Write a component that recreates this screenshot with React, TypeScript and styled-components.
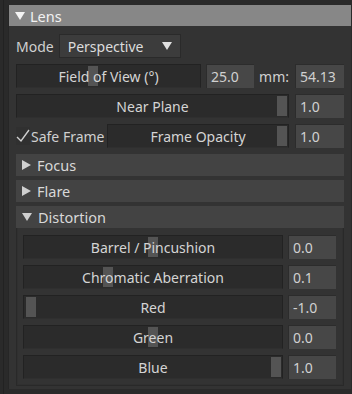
import styled, { createGlobalStyle } from "styled-components";

const GlobalStyle = createGlobalStyle`
  html, body {
    margin: 0;
    padding: 0;
    background: #2a2a2a;
  }
  * {
    box-sizing: border-box;
  }
`;

const Frame = styled.div`
  width: 352px;
  height: 394px;
  padding: 5px 1px 5px 8px;
  background: linear-gradient(
    to right,
    #2a2a2a 3px,
    #222222 3px,
    #222222 4px,
    #2a2a2a 4px
  );
  font-family: "Noto Sans", "Open Sans", sans-serif;
  font-size: 14px;
  color: #d2d2d2;
`;

const Panel = styled.div`
  height: 100%;
  display: flex;
  flex-direction: column;
  background: #333333;
  border-left: 1px solid #262626;
`;

const PanelHeader = styled.div`
  height: 21px;
  flex: none;
  display: flex;
  align-items: center;
  gap: 5px;
  padding-left: 6px;
  background: #878787;
  color: #f2f2f2;
  font-size: 14.5px;
`;

const Body = styled.div`
  flex: 1;
  display: flex;
  flex-direction: column;
  padding: 8px 7px 0 7px;
`;

const Row = styled.div<{ $gap?: number; $top?: number }>`
  height: 24px;
  flex: none;
  display: flex;
  align-items: center;
  gap: ${({ $gap }) => $gap ?? 5}px;
  margin-top: ${({ $top }) => $top ?? 6}px;
`;

const Label = styled.span`
  white-space: nowrap;
  color: #d0d0d0;
`;

const Dropdown = styled.div`
  width: 122px;
  height: 24px;
  display: flex;
  align-items: center;
  justify-content: space-between;
  padding: 0 8px 0 8px;
  background: #3c3c3c;
  border: 1px solid #2a2a2a;
  color: #dcdcdc;
`;

const Track = styled.div<{ $width?: number }>`
  position: relative;
  height: 24px;
  flex: ${({ $width }) => ($width ? "none" : "1")};
  width: ${({ $width }) => ($width ? `${$width}px` : "auto")};
  background: #2b2b2b;
  border: 1px solid #222222;
  border-bottom-color: #2f2f2f;
  display: flex;
  align-items: center;
  justify-content: center;
`;

const Thumb = styled.div`
  position: absolute;
  top: 1px;
  bottom: 1px;
  width: 10px;
  background: #545454;
`;

const TrackText = styled.span`
  position: relative;
  color: #d4d4d4;
  white-space: nowrap;
`;

const Value = styled.div<{ $width?: number }>`
  width: ${({ $width }) => $width ?? 49}px;
  height: 24px;
  flex: none;
  display: flex;
  align-items: center;
  padding-left: 4px;
  background: #474747;
  border-top: 1px solid #2c2c2c;
  border-left: 1px solid #2c2c2c;
  color: #d0d0d0;
`;

const Check = styled.div`
  display: flex;
  align-items: center;
  gap: 1px;
  width: 85px;
  flex: none;
`;

const CheckBox = styled.div`
  width: 14px;
  height: 18px;
  flex: none;
  display: flex;
  align-items: center;
  justify-content: center;
  background: #303030;
`;

const Section = styled.div<{ $top: number }>`
  height: 22px;
  flex: none;
  display: flex;
  align-items: center;
  gap: 6px;
  padding-left: 6px;
  margin-top: ${({ $top }) => $top}px;
  background: #434343;
  color: #d8d8d8;
  font-size: 14.5px;
`;

const Nested = styled.div`
  display: flex;
  flex-direction: column;
  padding: 0 7px 6px 6px;
  border: 1px solid #292929;
  border-top: none;
  box-shadow: inset 1px 0 0 #303030, inset -1px -1px 0 #303030;
`;

const Down = ({ color = "#e8e8e8" }: { color?: string }) => (
  <svg width="10" height="8" viewBox="0 0 10 8">
    <polygon points="0,0 10,0 5,8" fill={color} />
  </svg>
);

const Right = () => (
  <svg width="9" height="10" viewBox="0 0 9 10">
    <polygon points="0,0 9,5 0,10" fill="#cfcfcf" />
  </svg>
);

const Slider = ({
  label,
  pos,
  width,
}: {
  label: string;
  pos: number;
  width?: number;
}) => (
  <Track $width={width}>
    <Thumb style={{ left: `calc(${pos} * (100% - 11px))` }} />
    <TrackText>{label}</TrackText>
  </Track>
);

const distortion = [
  { label: "Barrel / Pincushion", pos: 0.5, value: "0.0" },
  { label: "Chromatic Aberration", pos: 0.32, value: "0.1" },
  { label: "Red", pos: 0.01, value: "-1.0" },
  { label: "Green", pos: 0.5, value: "0.0" },
  { label: "Blue", pos: 1, value: "1.0" },
];

export default function App() {
  return (
    <>
      <GlobalStyle />
      <Frame>
        <Panel>
          <PanelHeader>
            <Down color="#f4f4f4" />
            Lens
          </PanelHeader>
          <Body>
            <Row $gap={5} $top={0}>
              <Label>Mode</Label>
              <Dropdown>
                Perspective
                <Down color="#e0e0e0" />
              </Dropdown>
            </Row>
            <Row>
              <Slider label="Field of View (°)" pos={0.41} />
              <Value $width={48}>25.0</Value>
              <Label style={{ margin: "0 1px 0 0" }}>mm:</Label>
              <Value>54.13</Value>
            </Row>
            <Row $gap={6}>
              <Slider label="Near Plane" pos={1} />
              <Value>1.0</Value>
            </Row>
            <Row $gap={6}>
              <Check>
                <CheckBox>
                  <svg width="14" height="14" viewBox="0 0 14 14">
                    <polyline
                      points="1,8 5,12 13,1"
                      fill="none"
                      stroke="#cfcfcf"
                      strokeWidth="1.4"
                    />
                  </svg>
                </CheckBox>
                <Label>Safe Frame</Label>
              </Check>
              <Slider label="Frame Opacity" pos={1} />
              <Value>1.0</Value>
            </Row>
            <Section $top={6}>
              <Right />
              Focus
            </Section>
            <Section $top={4}>
              <Right />
              Flare
            </Section>
            <Section $top={4}>
              <Down color="#cfcfcf" />
              Distortion
            </Section>
            <Nested>
              {distortion.map((d, i) => (
                <Row key={d.label} $top={i === 0 ? 7 : 6}>
                  <Slider label={d.label} pos={d.pos} />
                  <Value $width={48}>{d.value}</Value>
                </Row>
              ))}
            </Nested>
          </Body>
        </Panel>
      </Frame>
    </>
  );
}
